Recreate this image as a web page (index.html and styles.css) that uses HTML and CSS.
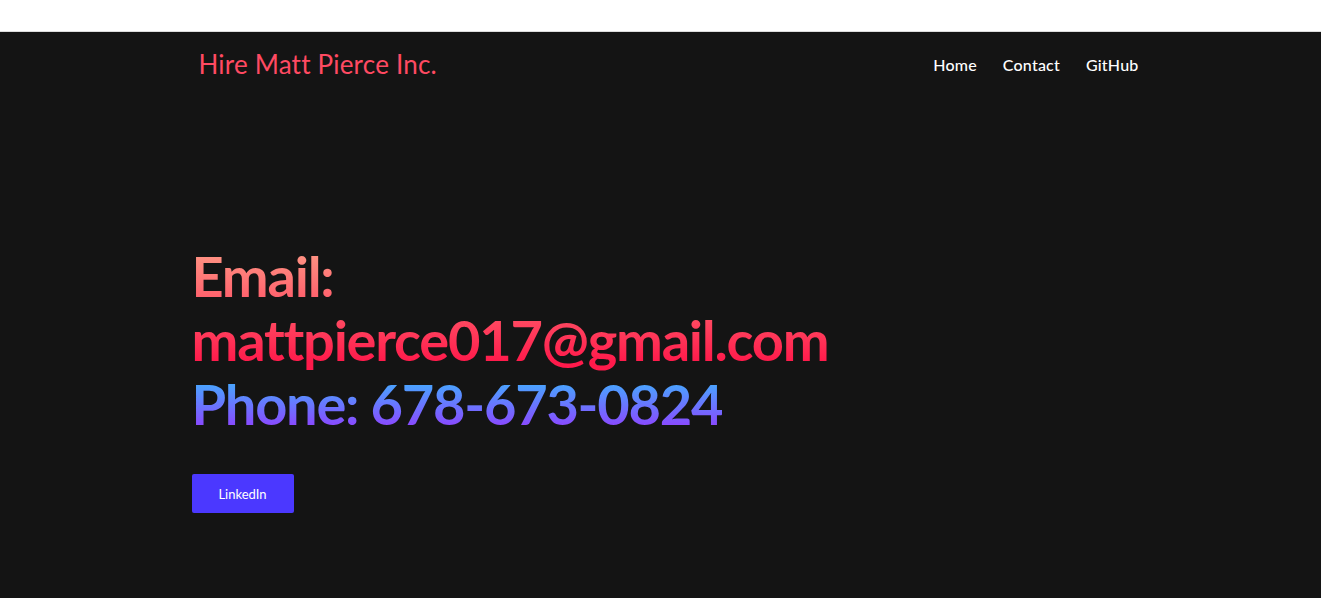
FILE: index.html
```html
<!DOCTYPE html>
<html lang="en">
<head>
<meta charset="utf-8">
<title>Hire Matt Pierce Inc.</title>
<link rel="stylesheet" href="styles.css">
</head>
<body>
<div class="topbar"></div>
<main class="page">
  <header class="container header">
    <a class="brand" href="#">Hire Matt Pierce Inc.</a>
    <nav class="nav">
      <a href="#">Home</a>
      <a href="#">Contact</a>
      <a href="#">GitHub</a>
    </nav>
  </header>
  <section class="container hero">
    <h1 class="headline">
      <span class="grad-red">Email:<br>mattpierce017@gmail.com</span>
      <span class="grad-blue">Phone: 678-673-0824</span>
    </h1>
    <a class="btn" href="#">LinkedIn</a>
  </section>
</main>
</body>
</html>
```
FILE: styles.css
```css
* { box-sizing: border-box; }
html, body { margin: 0; padding: 0; }
body {
  font-family: "Lato", "Noto Sans", sans-serif;
  background: #141414;
  color: #fff;
  height: 598px;
  overflow: hidden;
}
.topbar {
  height: 32px;
  background: #fff;
  border-bottom: 1px solid #dcdcdc;
}
.page {
  background: #141414;
  min-height: 566px;
}
.container {
  width: 960px;
  margin: 0 auto;
  padding: 0 12px;
}
.header {
  display: flex;
  align-items: center;
  justify-content: space-between;
  height: 64px;
  padding-right: 2px;
}
.brand {
  color: #ff4a62;
  font-size: 26px;
  font-weight: 400;
  text-decoration: none;
  padding-left: 6px;
  letter-spacing: 0.2px;
}
.nav {
  display: flex;
  gap: 26px;
}
.nav a {
  color: #fff;
  font-size: 16px;
  font-weight: 500;
  text-decoration: none;
  letter-spacing: 0.2px;
}
.hero {
  padding-top: 148px;
  padding-left: 11px;
}
.headline {
  margin: 0;
  font-size: 56px;
  line-height: 64px;
  font-weight: 700;
  letter-spacing: -1.25px;
  font-variant-ligatures: none;
}
.grad-red,
.grad-blue {
  display: block;
  width: max-content;
  -webkit-background-clip: text;
  background-clip: text;
  color: transparent;
}
.grad-red {
  background-image: linear-gradient(180deg, #ff9283 8%, #ff1a4b 92%);
}
.grad-blue {
  background-image: linear-gradient(180deg, #46a9ff 15%, #8a48ff 85%);
}
.btn {
  display: inline-flex;
  align-items: center;
  justify-content: center;
  margin-top: 38px;
  width: 102px;
  height: 39px;
  background: #4b38ff;
  color: #fff;
  font-size: 13px;
  font-weight: 400;
  text-decoration: none;
  border-radius: 2px;
}
```
